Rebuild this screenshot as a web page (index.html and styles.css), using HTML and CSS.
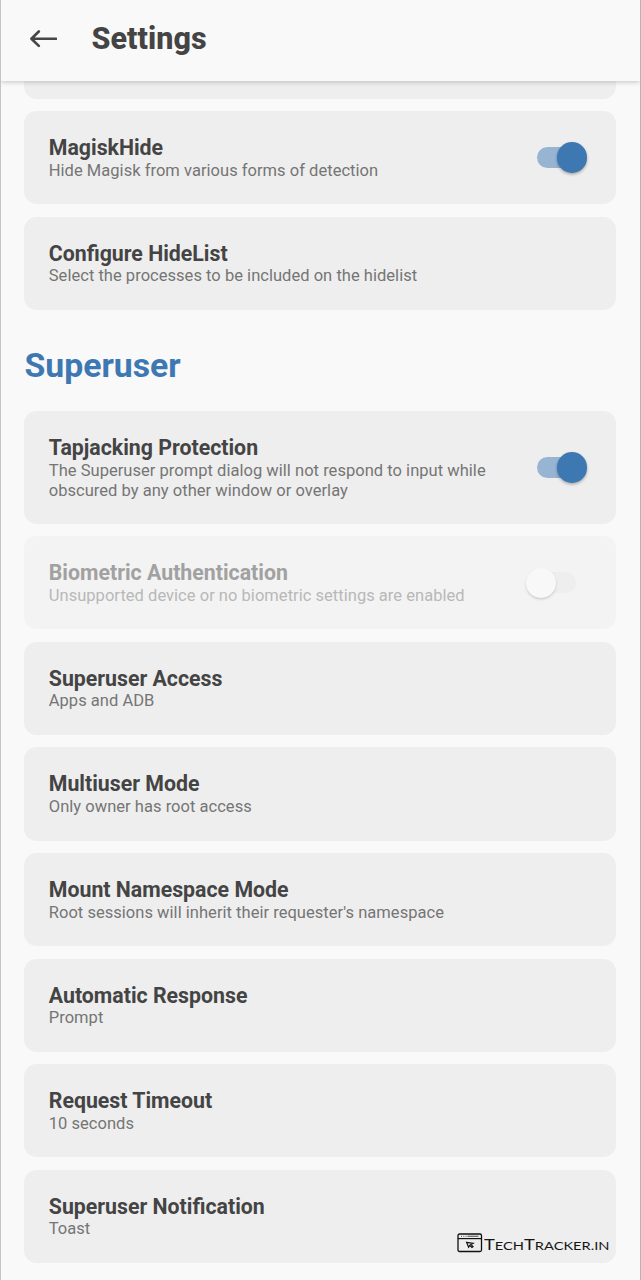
FILE: index.html
```html
<!DOCTYPE html>
<html lang="en">
<head>
<meta charset="utf-8">
<title>Settings</title>
<link rel="stylesheet" href="styles.css">
</head>
<body>
<div class="screen">
  <header class="topbar">
    <svg class="back" width="28" height="20" viewBox="0 0 28 20"><path d="M27 9.7H2.6M9.8 2.5L2.4 9.7L9.8 16.9" fill="none" stroke="#464646" stroke-width="2.6" stroke-linecap="round" stroke-linejoin="round"/></svg>
    <h1 class="title">Settings</h1>
  </header>
  <main class="list">
    <div class="card card-cut"></div>
    <section class="card">
      <div class="text"><h3 class="name">MagiskHide</h3><p class="desc">Hide Magisk from various forms of detection</p></div>
      <span class="switch on"><span class="thumb"></span></span>
    </section>
    <section class="card">
      <div class="text"><h3 class="name">Configure HideList</h3><p class="desc">Select the processes to be included on the hidelist</p></div>
    </section>
    <h2 class="heading">Superuser</h2>
    <section class="card card-tall">
      <div class="text"><h3 class="name">Tapjacking Protection</h3><p class="desc">The Superuser prompt dialog will not respond to input while<br>obscured by any other window or overlay</p></div>
      <span class="switch on"><span class="thumb"></span></span>
    </section>
    <section class="card disabled">
      <div class="text"><h3 class="name">Biometric Authentication</h3><p class="desc">Unsupported device or no biometric settings are enabled</p></div>
      <span class="switch off"><span class="thumb"></span></span>
    </section>
    <section class="card">
      <div class="text"><h3 class="name">Superuser Access</h3><p class="desc">Apps and ADB</p></div>
    </section>
    <section class="card">
      <div class="text"><h3 class="name">Multiuser Mode</h3><p class="desc">Only owner has root access</p></div>
    </section>
    <section class="card">
      <div class="text"><h3 class="name">Mount Namespace Mode</h3><p class="desc">Root sessions will inherit their requester's namespace</p></div>
    </section>
    <section class="card">
      <div class="text"><h3 class="name">Automatic Response</h3><p class="desc">Prompt</p></div>
    </section>
    <section class="card">
      <div class="text"><h3 class="name">Request Timeout</h3><p class="desc">10 seconds</p></div>
    </section>
    <section class="card">
      <div class="text"><h3 class="name">Superuser Notification</h3><p class="desc">Toast</p></div>
    </section>
  </main>
  <div class="watermark">
    <svg width="26" height="20" viewBox="0 0 26 20" fill="none" stroke="#111"><rect x="1" y="1" width="23.5" height="17.5" rx="1.5" stroke-width="1.3"/><path d="M1 5.6H24.5" stroke-width="1.2"/><path d="M4 3.3H5M6.3 3.3H7.3M8.6 3.3H9.6" stroke="#555" stroke-width="1"/><path d="M10.5 3.3H21.5" stroke="#777" stroke-width="1.4"/><path d="M9.6 9.3L16 10.3L13.9 11.4L16 13.6L14.9 14.4L12.8 12.4L11.6 14.2Z" stroke-width="1.2"/></svg>
    <svg class="brand" width="127" height="20" viewBox="0 0 127 20"><text y="17.3" textLength="125.5" lengthAdjust="spacingAndGlyphs"><tspan class="cap">T</tspan>ECH<tspan class="cap">T</tspan>RACKER.IN</text></svg>
  </div>
</div>
</body>
</html>
```
FILE: styles.css
```css
* { box-sizing: border-box; }
body { margin: 0; font-family: Roboto, "Liberation Sans", sans-serif; background: #f9f9f9; }
h1, h2, h3, p { margin: 0; }
.screen {
  position: relative;
  height: 1280px;
  overflow: hidden;
  background: #f9f9f9;
  border-left: 1px solid #c4c4c4;
  border-right: 1px solid #b4b4b4;
}
.topbar {
  position: relative;
  z-index: 1;
  height: 81px;
  padding: 0 0 4px 28px;
  display: flex;
  align-items: center;
  gap: 34.5px;
  background: #f9f9f9;
  box-shadow: 0 1px 5px rgba(0, 0, 0, .22);
}
.back { display: block; }
.title { font-size: 30.5px; line-height: 36px; font-weight: 800; color: #444; letter-spacing: 0.05px; }
.list { display: flex; flex-direction: column; gap: 12.4px; padding: 0 24px 0 23.4px; }
.card {
  height: 93.2px;
  flex: none;
  display: flex;
  align-items: center;
  justify-content: space-between;
  padding: 0 29px 0 24.4px;
  border-radius: 12.5px;
  background: #eee;
}
.card-cut { height: 17.7px; border-radius: 0 0 12.5px 12.5px; }
.card-tall { height: 112.6px; }
.name { font-size: 21.3px; line-height: 25px; font-weight: 700; color: #444; white-space: nowrap; }
.desc { padding-top: 0.6px; margin-bottom: -0.6px; font-size: 16.5px; line-height: 20px; letter-spacing: 0.03px; color: #757575; white-space: nowrap; }
.heading { height: 76.6px; padding-top: 22.2px; font-size: 33.8px; line-height: 44px; font-weight: 700; color: #3e78b2; }
.disabled { background: #f3f3f3; }
.disabled .name { color: #a1a1a1; }
.disabled .desc { color: #b8b8b8; }
.switch { flex: none; width: 50px; height: 31px; display: flex; align-items: center; }
.switch::before { content: ""; width: 42px; height: 21px; border-radius: 11px; background: #97b4d3; }
.thumb {
  z-index: 1;
  width: 30.5px;
  height: 30.5px;
  margin-left: -22.5px;
  border-radius: 50%;
  background: #3e78b2;
  box-shadow: 0 1.5px 3px rgba(0, 0, 0, .3);
}
.off { flex-direction: row-reverse; margin-right: 11.5px; }
.off::before { background: #eee; }
.off .thumb { margin: 0 -22.5px 0 0; background: #f8f8f8; box-shadow: 0 1.5px 2.5px rgba(0, 0, 0, .16); }
.watermark { position: absolute; left: 456px; top: 1233px; display: flex; align-items: center; gap: 1px; }
.brand { font-family: Lato, sans-serif; font-size: 11.6px; fill: #161616; }
.cap { font-size: 14.5px; }
```
